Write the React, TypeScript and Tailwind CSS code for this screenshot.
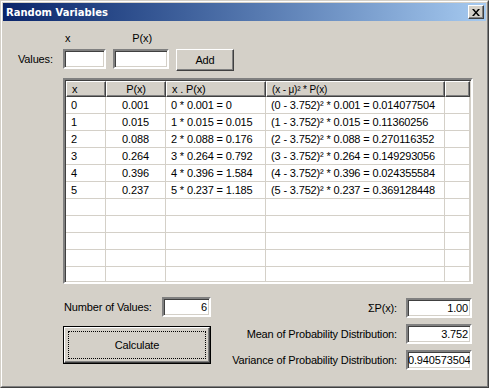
import React from "react";

const rows = [
  ["0", "0.001", "0 * 0.001 = 0", "(0 - 3.752)² * 0.001 = 0.014077504"],
  ["1", "0.015", "1 * 0.015 = 0.015", "(1 - 3.752)² * 0.015 = 0.11360256"],
  ["2", "0.088", "2 * 0.088 = 0.176", "(2 - 3.752)² * 0.088 = 0.270116352"],
  ["3", "0.264", "3 * 0.264 = 0.792", "(3 - 3.752)² * 0.264 = 0.149293056"],
  ["4", "0.396", "4 * 0.396 = 1.584", "(4 - 3.752)² * 0.396 = 0.024355584"],
  ["5", "0.237", "5 * 0.237 = 1.185", "(5 - 3.752)² * 0.237 = 0.369128448"],
  ["", "", "", ""],
  ["", "", "", ""],
  ["", "", "", ""],
  ["", "", "", ""],
  ["", "", "", ""],
];

const sunken =
  "border-2 border-t-[#808080] border-l-[#808080] border-b-white border-r-white shadow-[inset_1px_1px_0_#404040,inset_-1px_-1px_0_#d4d0c8] bg-white";

const raised =
  "border border-t-white border-l-white border-b-[#404040] border-r-[#404040] shadow-[inset_-1px_-1px_0_#808080,inset_1px_1px_0_#d4d0c8] bg-[#d4d0c8]";

function TextBox({ value, className }: { value?: string; className: string }) {
  return (
    <div className={`${sunken} ${className} flex items-center justify-end pr-[2px] overflow-hidden whitespace-nowrap`}>
      {value}
    </div>
  );
}

function HeaderCell({ label, className }: { label: string; className: string }) {
  return (
    <div className={`${raised} ${className} h-[16px] flex items-center px-[5px] whitespace-nowrap overflow-hidden`}>
      {label}
    </div>
  );
}

export default function App() {
  return (
    <div
      className="w-[489px] h-[388px] border border-t-[#d4d0c8] border-l-[#d4d0c8] border-b-[#404040] border-r-[#404040] text-[11px] tracking-[-0.15px] text-black leading-[13px]"
      style={{ fontFamily: '"Liberation Sans", Arial, sans-serif' }}>
      <div className="w-full h-full border border-t-white border-l-white border-b-[#808080] border-r-[#808080] bg-[#d4d0c8] p-[1px] flex flex-col">
        {/* title bar */}
        <div className="h-[18px] flex items-center justify-between bg-gradient-to-r from-[#0a246a] to-[#a6caf0] pl-[3px] pr-[2px]">
          <span
            className="text-white font-bold text-[10px] tracking-normal"
            style={{ fontFamily: '"DejaVu Sans", Verdana, sans-serif' }}>
            Random Variables
          </span>
          <div className={`${raised} w-[16px] h-[14px] flex items-center justify-center`}>
            <svg width="8" height="7" viewBox="0 0 8 7">
              <path d="M0 0h2l2 2.5L6 0h2L5 3.5 8 7H6L4 4.5 2 7H0l3-3.5z" fill="#000" />
            </svg>
          </div>
        </div>

        {/* input labels */}
        <div className="flex h-[13px] mt-[11px]">
          <span className="ml-[62px]">x</span>
          <span className="ml-[62px]">P(x)</span>
        </div>

        {/* values row */}
        <div className="flex items-start h-[22px] mt-[4px]">
          <div className="w-[60px] h-[20px] flex items-center pl-[15px]">Values:</div>
          <TextBox className="w-[43px] h-[20px]" />
          <TextBox className="w-[56px] h-[20px] ml-[7px]" />
          <div className={`${raised} w-[58px] h-[22px] ml-[7px] flex items-center justify-center`}>Add</div>
        </div>

        {/* list view */}
        <div className="ml-[60px] mt-[7px] w-[410px] h-[206px] border-2 border-t-[#808080] border-l-[#808080] border-b-white border-r-white shadow-[inset_1px_1px_0_#404040,inset_-1px_-1px_0_#d4d0c8] bg-white overflow-hidden p-[1px]">
          <div className="flex">
            <HeaderCell label="x" className="w-[40px]" />
            <HeaderCell label="P(x)" className="w-[60px] justify-center" />
            <HeaderCell label="x . P(x)" className="w-[100px]" />
            <HeaderCell label="(x - μ)² * P(x)" className="w-[179px] text-[10px]" />
            <HeaderCell label="" className="w-[25px]" />
          </div>
          {rows.map((r, i) => (
            <div key={i} className="flex h-[17px] border-b border-[#d4d0c8]">
              <div className="w-[40px] border-r border-[#d4d0c8] px-[5px] flex items-center">{r[0]}</div>
              <div className="w-[60px] border-r border-[#d4d0c8] flex items-center justify-center">{r[1]}</div>
              <div className="w-[100px] border-r border-[#d4d0c8] px-[5px] flex items-center whitespace-nowrap">{r[2]}</div>
              <div className="w-[179px] border-r border-[#d4d0c8] px-[5px] flex items-center whitespace-nowrap">{r[3]}</div>
              <div className="w-[25px] border-r border-[#d4d0c8]" />
            </div>
          ))}
        </div>

        {/* bottom section */}
        <div className="flex justify-between">
          <div className="ml-[60px] mt-[13px] flex flex-col">
            <div className="flex items-center h-[20px]">
              <span className="w-[99px] pl-[1px]">Number of Values:</span>
              <TextBox value="6" className="w-[49px] h-[20px]" />
            </div>
            <div className="mt-[9px] w-[148px] h-[38px] border border-black">
              <div className={`${raised} w-full h-full p-[3px]`}>
                <div className="w-full h-full border border-dotted border-black flex items-center justify-center">
                  Calculate
                </div>
              </div>
            </div>
          </div>
          <div className="mr-[14px] mt-[14px] flex flex-col gap-[6px]">
            <div className="flex items-center justify-end h-[20px]">
              <span>ΣP(x):</span>
              <TextBox value="1.00" className="w-[66px] h-[20px] ml-[9px]" />
            </div>
            <div className="flex items-center justify-end h-[20px]">
              <span>Mean of Probability Distribution:</span>
              <TextBox value="3.752" className="w-[66px] h-[20px] ml-[9px]" />
            </div>
            <div className="flex items-center justify-end h-[20px]">
              <span>Variance of Probability Distribution:</span>
              <div className={`${sunken} w-[66px] h-[20px] ml-[9px] flex items-center overflow-hidden whitespace-nowrap`}>
                0.940573504
              </div>
            </div>
          </div>
        </div>
      </div>
    </div>
  );
}
